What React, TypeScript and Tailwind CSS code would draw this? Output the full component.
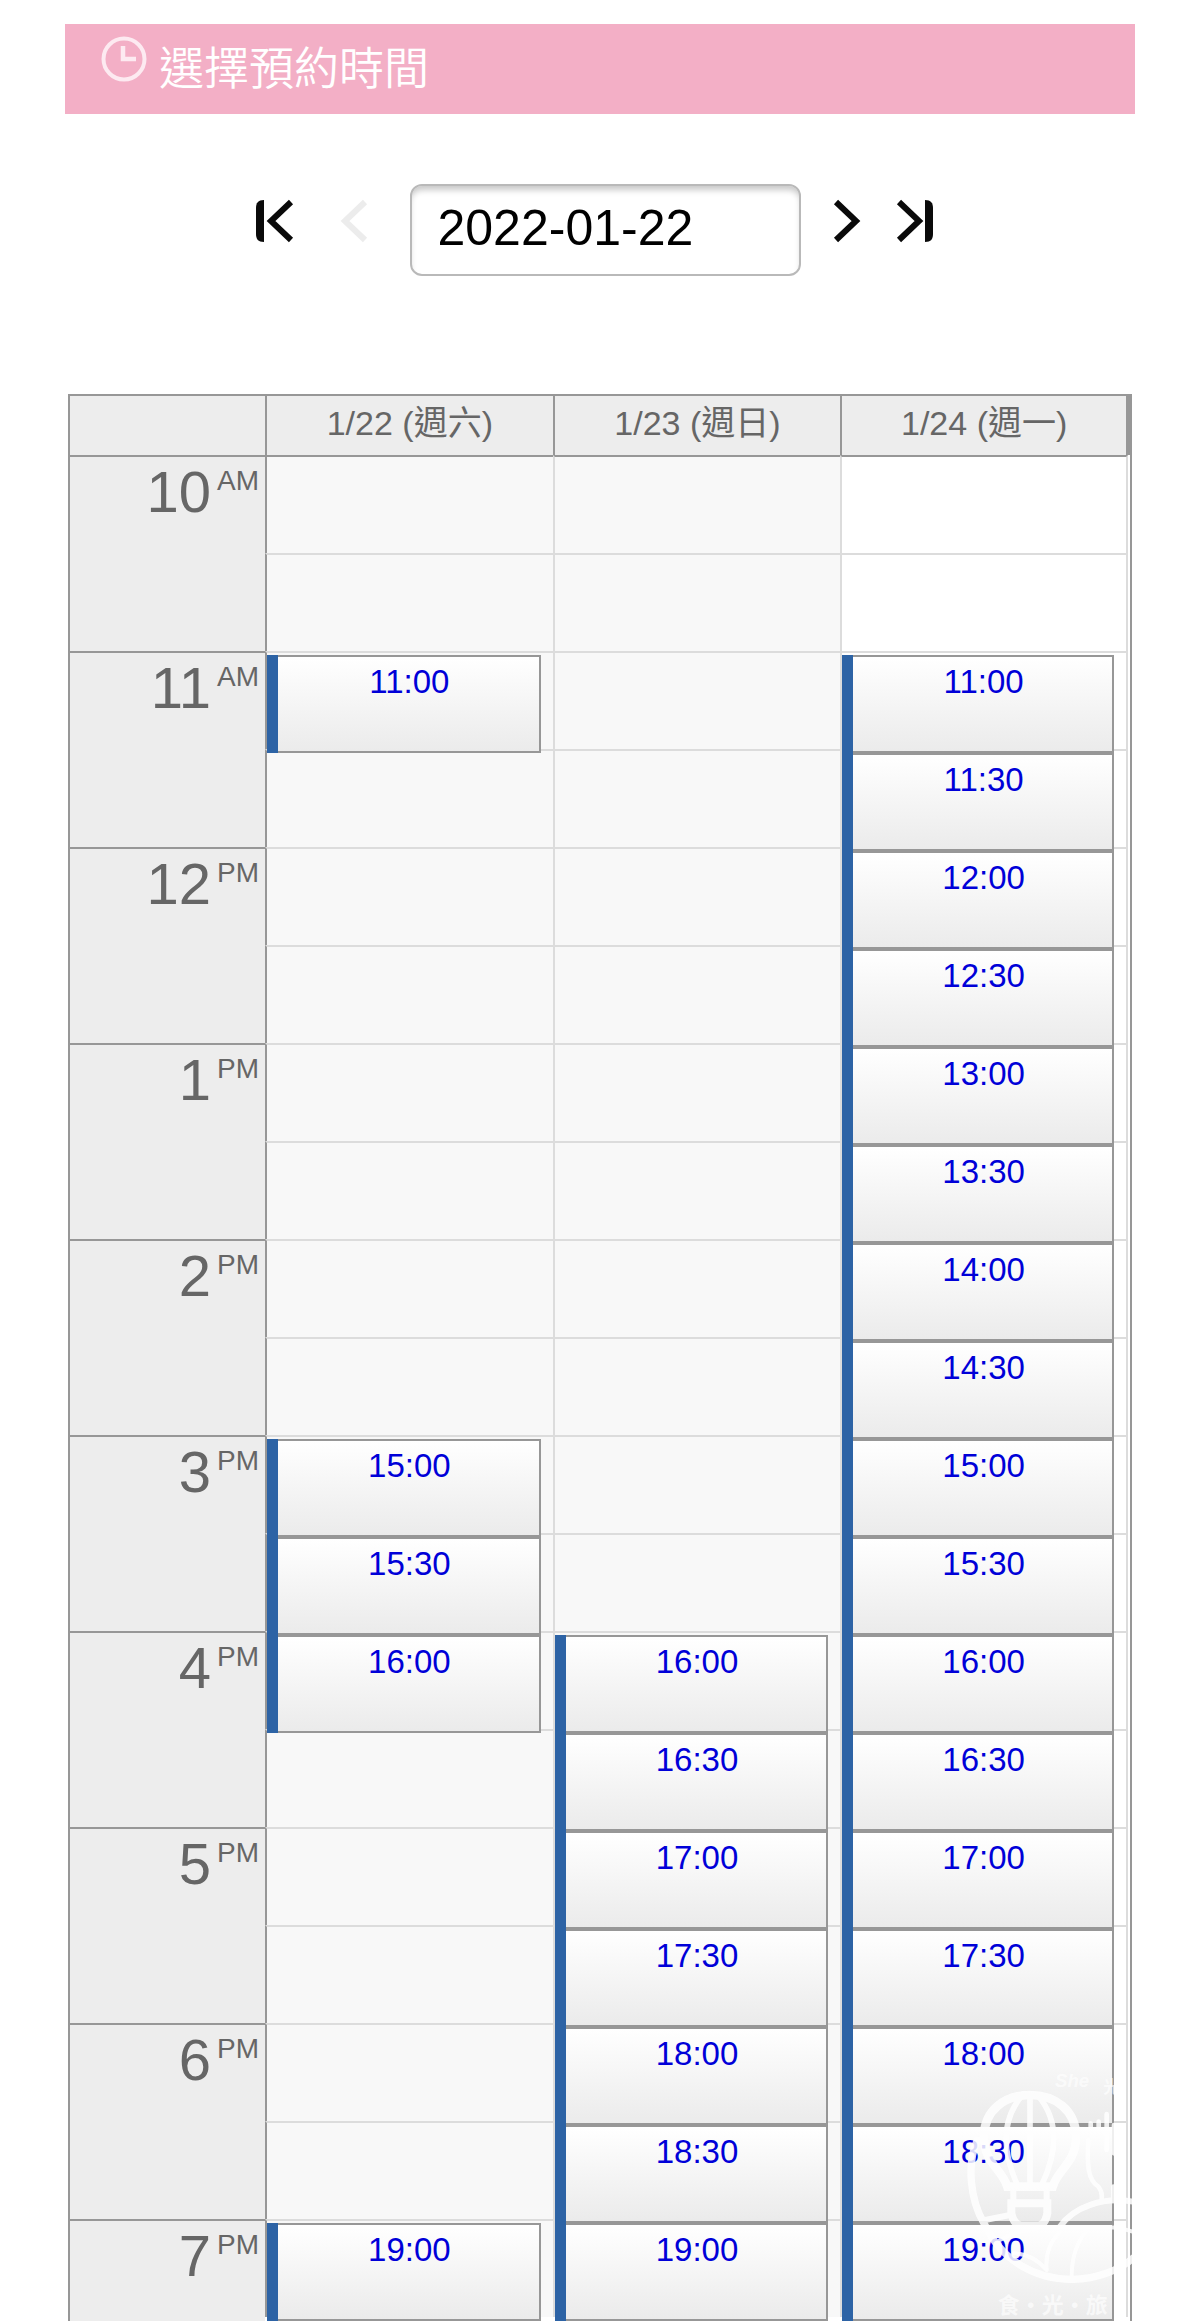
import { useState } from "react";

type Day = { label: string; open: boolean; slots: string[] };

const HOURS = [
  { hour: 10, label: "10", period: "AM" },
  { hour: 11, label: "11", period: "AM" },
  { hour: 12, label: "12", period: "PM" },
  { hour: 13, label: "1", period: "PM" },
  { hour: 14, label: "2", period: "PM" },
  { hour: 15, label: "3", period: "PM" },
  { hour: 16, label: "4", period: "PM" },
  { hour: 17, label: "5", period: "PM" },
  { hour: 18, label: "6", period: "PM" },
  { hour: 19, label: "7", period: "PM" },
];

const DAYS: Day[] = [
  { label: "1/22 (週六)", open: false, slots: ["11:00", "15:00", "15:30", "16:00", "19:00"] },
  {
    label: "1/23 (週日)",
    open: false,
    slots: ["16:00", "16:30", "17:00", "17:30", "18:00", "18:30", "19:00"],
  },
  {
    label: "1/24 (週一)",
    open: true,
    slots: [
      "11:00", "11:30", "12:00", "12:30", "13:00", "13:30", "14:00", "14:30", "15:00",
      "15:30", "16:00", "16:30", "17:00", "17:30", "18:00", "18:30", "19:00",
    ],
  },
];

function ClockIcon() {
  return (
    <svg viewBox="0 0 46 46" className="h-[46px] w-[46px] shrink-0" fill="none" stroke="#fdeaf1" aria-hidden="true">
      <circle cx="23" cy="23" r="20.5" strokeWidth="4" />
      <path d="M22 10v13h13" strokeWidth="4.5" />
    </svg>
  );
}

function NavButton({ label, d, bar, disabled }: { label: string; d: string; bar?: string; disabled?: boolean }) {
  return (
    <button type="button" aria-label={label} disabled={disabled} className="h-12 w-11 text-[#0a0a0a] disabled:text-[#ececec]">
      <svg viewBox="0 0 44 48" className="h-12 w-11" fill="none" stroke="currentColor" aria-hidden="true">
        <path d={d} strokeWidth="6" />
        {bar && <path d={bar} fill="currentColor" stroke="none" />}
      </svg>
    </button>
  );
}

function Slot({ time }: { time: string }) {
  return (
    <a href={`#${time}`} className="relative z-10 mt-0.5 mr-3 -mb-1 flex h-[98px] text-[33px] leading-[50px] text-[#0000d8]">
      <span className="w-[11px] bg-[#2d63a5]" />
      <span className="flex-1 border-y-2 border-r-2 border-[#979797] bg-linear-to-b from-white to-[#ebebeb] pl-0.5 text-center">
        {time}
      </span>
    </a>
  );
}

function HalfHourCells({ time }: { time: string }) {
  return (
    <>
      {DAYS.map((day, i) => (
        <td
          key={day.label}
          className={`h-[98px] border-t-2 border-l-2 p-0 align-top last:border-r-2 ${
            i === 0 ? "border-t-[#dcdcdc] border-l-[#979797]" : "border-[#dcdcdc]"
          } ${day.open ? "bg-white" : "bg-[#f8f8f8]"}`}
        >
          {day.slots.includes(time) && <Slot time={time} />}
        </td>
      ))}
    </>
  );
}

function Watermark() {
  return (
    <svg
      viewBox="0 0 810 843"
      className="pointer-events-none absolute right-0 bottom-0 z-20 h-[281px] w-[270px]"
      fill="none"
      stroke="white"
      strokeLinecap="round"
      strokeWidth="18"
      opacity="0.85"
      aria-hidden="true"
    >
      {/* balloon */}
      <path d="M232 440C215 385 162 370 162 290C162 210 225 165 300 165C375 165 438 210 438 290C438 370 385 385 368 440Z" strokeWidth="26" />
      <path d="M300 162V435M275 168C215 240 215 330 262 435M325 168C385 240 385 330 335 435" strokeWidth="17" />
      <path d="M250 450V480M350 450V480" />
      <path d="M244 490H352V520Q345 556 325 556H275Q252 556 244 520Z" strokeWidth="24" />
      {/* ring and hills */}
      <path d="M142 300C110 370 120 480 162 550C215 665 320 720 430 718C500 716 570 690 608 655" strokeWidth="22" />
      <path d="M165 540L240 525M390 560C430 500 520 470 608 485" />
      <path d="M210 600C260 570 340 560 420 565S540 550 608 575M250 640C290 640 320 655 350 690M350 690C345 640 365 600 390 575M425 710C425 650 440 610 470 570" strokeWidth="12" />
      {/* tower and figure */}
      <path d="M482 265V250M506 265V245M530 330V222M552 340V255M475 300C470 380 475 420 505 440Q518 455 515 480M550 440V480" strokeWidth="14" />
      <g fill="white" stroke="none" fontWeight="700" opacity="0.8">
        <text x="375" y="142" fontSize="56" fontStyle="italic" className="font-['Liberation_Sans']">She</text>
        <text x="520" y="160" fontSize="50" className="font-['Noto_Sans_CJK_TC']">光</text>
        <text x="203" y="820" fontSize="66" className="font-['Noto_Sans_CJK_TC']">食·光·旅</text>
      </g>
    </svg>
  );
}

export default function App() {
  const [date, setDate] = useState("2022-01-22");

  return (
    <main className="relative bg-white px-[65px] pt-6 font-['Liberation_Sans','Noto_Sans_CJK_TC',sans-serif]">
      <header className="flex h-[90px] items-start gap-3 bg-[#f3afc6] pt-3 pl-9">
        <ClockIcon />
        <h1 className="font-['Noto_Sans_CJK_TC',sans-serif] text-[45px] leading-[60px] font-[350] text-white">
          選擇預約時間
        </h1>
      </header>

      <nav className="mt-[70px] flex items-start justify-center pr-3">
        <div className="mr-[34px] flex gap-9 pt-[13px]">
          <NavButton label="第一天" d="M39 5L19 24L39 43" bar="M12 3V45C6 45 4 42 4 37V11C4 6 6 3 12 3Z" />
          <NavButton label="前一天" d="M33 5L13 24L33 43" disabled />
        </div>
        <input
          aria-label="預約日期"
          value={date}
          onChange={(e) => setDate(e.target.value)}
          className="h-[92px] w-[391px] rounded-xl border-2 border-[#b9b9b9] px-[26px] pb-1 text-[50px] text-black shadow-[inset_0_6px_6px_-2px_#c8c8c8] outline-none"
        />
        <div className="ml-6 flex gap-6 pt-[13px]">
          <NavButton label="後一天" d="M11 5L31 24L11 43" />
          <NavButton label="最後一天" d="M6 5L26 24L6 43" bar="M32 3V45C38 45 40 42 40 37V11C40 6 38 3 32 3Z" />
        </div>
      </nav>

      <div className="mx-[3px] mt-[118px] border-2 border-b-0 border-[#979797] pr-0.5">
        <table className="w-full table-fixed border-separate border-spacing-0 text-[#666]">
          <colgroup>
            <col className="w-[195px]" />
            <col />
            <col />
            <col />
          </colgroup>
          <thead>
            <tr className="h-[59px] bg-[#ededed]">
              <td />
              {DAYS.map((day) => (
                <th
                  key={day.label}
                  scope="col"
                  className="border-l-2 border-[#979797] p-0 pb-1.5 text-[34px] leading-[50px] font-normal last:border-r-2 last:shadow-[2px_0_0_#979797]"
                >
                  {day.label}
                </th>
              ))}
            </tr>
          </thead>
          {HOURS.map(({ hour, label, period }) => (
            <tbody key={hour} className="group">
              <tr className="group-first-of-type:[&>*]:border-t-[#979797]">
                <th
                  scope="row"
                  rowSpan={hour === 19 ? 1 : 2}
                  className="border-t-2 border-[#979797] bg-[#ededed] p-0 pr-1.5 align-top font-normal"
                >
                  <div className="flex justify-end gap-1.5 pt-0.5">
                    <span className="text-[58px] leading-[66px]">{label}</span>
                    <span className="pt-1 text-[28px] leading-[36px]">{period}</span>
                  </div>
                </th>
                <HalfHourCells time={`${hour}:00`} />
              </tr>
              {hour !== 19 && (
                <tr>
                  <HalfHourCells time={`${hour}:30`} />
                </tr>
              )}
            </tbody>
          ))}
        </table>
        <div className="h-1 w-[195px] bg-[#ededed]" />
      </div>
      <Watermark />
    </main>
  );
}
